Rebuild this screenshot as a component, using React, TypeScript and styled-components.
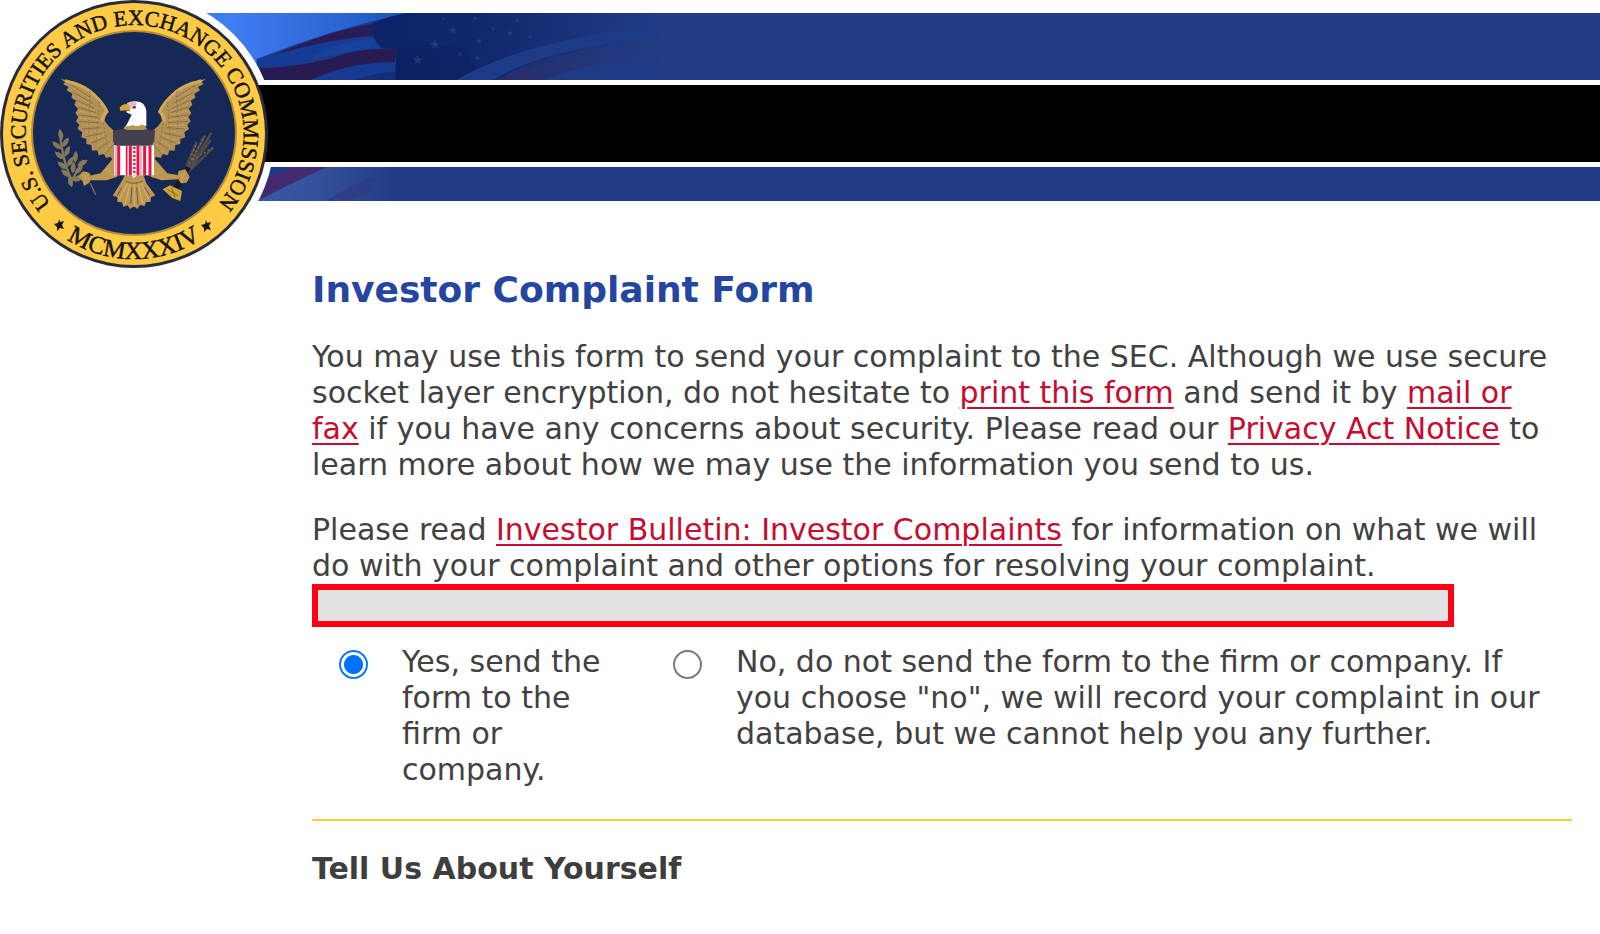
import React from "react";
import styled, { createGlobalStyle } from "styled-components";

const GlobalStyle = createGlobalStyle`
  *, *::before, *::after { box-sizing: border-box; }
  body {
    margin: 0;
    background: #fff;
    color: #414141;
    font-family: Verdana, "DejaVu Sans", sans-serif;
    font-size: 30px;
    line-height: 36px;
  }
`;

const Page = styled.div`
  min-height: 100vh;
  overflow: hidden;
`;

const Masthead = styled.header`
  position: relative;
  display: flex;
  flex-direction: column;
  gap: 5px;
  padding: 13px 0 0 134px;
`;

const Band = styled.div<{ $height: number; $color: string }>`
  height: ${(p) => p.$height}px;
  background: ${(p) => p.$color};
  overflow: hidden;

  svg { display: block; }
`;

const SealLink = styled.a`
  position: absolute;
  top: 0;
  left: 0;

  svg { display: block; }
`;

const RingText = styled.text<{ $size: number }>`
  font-family: "Liberation Serif", "Times New Roman", serif;
  font-size: ${(p) => p.$size}px;
  fill: #15151c;
  stroke: #15151c;
  stroke-width: 0.5px;
`;

const Content = styled.main`
  padding: 67px 28px 32px 312px;
`;

const Title = styled.h1`
  margin: 0 0 27px;
  color: #2546a0;
  font-size: 36px;
  line-height: 44px;
`;

const Paragraph = styled.p`
  margin: 0 0 29px;
  padding-right: 14px;

  &:last-of-type { margin-bottom: 0; }
`;

const TextLink = styled.a`
  color: #c60c30;
  text-decoration: underline;
  text-decoration-thickness: 2px;
  text-underline-offset: 4px;
`;

const Notice = styled.div`
  height: 43px;
  margin-right: 118px;
  border: 6px solid #ff0015;
  background: #e1e1e1;
`;

const Options = styled.fieldset`
  display: flex;
  gap: 61px;
  margin: 0;
  padding: 17px 14px 31px 27px;
  border: 0;
  border-bottom: 2px solid #ffcb3d;
`;

const Option = styled.label<{ $grow?: boolean }>`
  display: flex;
  align-items: flex-start;
  gap: 34px;
  flex: ${(p) => (p.$grow ? "1 1 0" : "0 0 273px")};
  min-width: 0;
`;

const Radio = styled.input`
  appearance: none;
  flex: none;
  width: 29px;
  height: 29px;
  margin: 6px 0 0;
  border: 2px solid #7b7b7b;
  border-radius: 50%;
  background: #fff;

  &:checked {
    border-color: #0a75ff;
    background: radial-gradient(circle, #0070ff 9px, #fff 10px);
  }
`;

const SectionTitle = styled.h2`
  margin: 30px 0 0;
  color: #3e3e3e;
  font-size: 30px;
  line-height: 36px;
`;

const FlagTop = () => (
  <svg width="640" height="67" viewBox="-288 40 1920 201" aria-hidden="true">
    <defs>
      <linearGradient id="sky" gradientUnits="userSpaceOnUse" x1="0" y1="0" x2="520" y2="0">
        <stop offset="0" stopColor="#3f7df2" />
        <stop offset="0.25" stopColor="#3973e6" />
        <stop offset="0.7" stopColor="#2663d0" />
        <stop offset="1" stopColor="#1c52b4" />
      </linearGradient>
      <linearGradient id="canton" gradientUnits="userSpaceOnUse" x1="420" y1="0" x2="1300" y2="0">
        <stop offset="0" stopColor="#0c2367" />
        <stop offset="0.35" stopColor="#0f276b" />
        <stop offset="0.7" stopColor="#1a3279" />
        <stop offset="1" stopColor="#213c85" />
      </linearGradient>
      <linearGradient id="stripe" gradientUnits="userSpaceOnUse" x1="560" y1="0" x2="1290" y2="0">
        <stop offset="0" stopColor="#2b2367" />
        <stop offset="0.5" stopColor="#26306f" />
        <stop offset="1" stopColor="#213c85" />
      </linearGradient>
    </defs>
    <rect x="-288" y="40" width="1000" height="201" fill="url(#sky)" />
    <path d="M80 178 Q300 90 530 40 H1632 V241 H80Z" fill="#193c8b" />
    <path d="M190 142 Q330 86 425 74 L435 110 Q330 108 90 182Z" fill="#291d57" />
    <path d="M80 182 Q260 122 430 112 L450 148 Q350 158 220 188 L90 205Z" fill="#163b94" />
    <path d="M250 165 Q330 125 430 116 L444 145 Q350 155 250 180Z" fill="#17429d" />
    <path d="M90 205 Q250 200 350 160 Q420 144 500 150 L495 188 Q400 185 300 218 L240 241 H90Z" fill="#281b54" />
    <path d="M245 241 Q380 185 495 188 V241Z" fill="#173b91" />
    <path d="M370 241 Q430 220 495 216 V241Z" fill="#142d78" />
    <path d="M420 76 Q450 55 530 40 H1632 V241 H495 L500 150 L455 146 Q425 115 420 76Z" fill="url(#canton)" />
    <path d="M500 150 Q620 125 700 150 L740 205 L680 241 H495Z" fill="#07205f" opacity=".5" />
    <path d="M680 241 Q860 130 1260 80 L1290 112 Q930 150 790 241Z" fill="#1e3b87" />
    <path d="M800 241 Q950 155 1270 125 L1250 178 Q1050 195 940 241Z" fill="url(#stripe)" />
    <path d="M940 241 Q1060 190 1290 170 V241Z" fill="#203b85" />
    <g fill="#3b559b" opacity=".45">
      {[[668, 91, 15], [615, 134, 16], [563, 181, 16], [748, 124, 11], [690, 163, 9], [742, 174, 10], [840, 100, 9], [900, 113, 7], [735, 56, 8], [790, 88, 7], [640, 58, 7], [860, 62, 7]].map(([x, y, r]) => (
        <path
          key={`${x}-${y}`}
          transform={`translate(${x} ${y}) scale(${r})`}
          d="M0-1 L.25-.3 1-.3 .4.15 .6.9 0 .4-.6.9-.4.15-1-.3-.25-.3Z"
        />
      ))}
    </g>
  </svg>
);

const FlagBottom = () => (
  <svg width="280" height="34" viewBox="-288 500 840 102" aria-hidden="true">
    <defs>
      <linearGradient id="lowSky" gradientUnits="userSpaceOnUse" x1="100" y1="0" x2="500" y2="0">
        <stop offset="0" stopColor="#3658a8" />
        <stop offset="0.4" stopColor="#34509a" />
        <stop offset="1" stopColor="#213c85" />
      </linearGradient>
    </defs>
    <rect x="-288" y="500" width="840" height="102" fill="url(#lowSky)" />
    <path d="M100 500 H185 L115 542Z" fill="#1e3988" />
    <path d="M115 530 L190 500 H290 Q180 550 90 598Z" fill="#432a70" />
    <path d="M290 602 Q370 545 440 530 L430 570 L360 602Z" fill="#2e397f" opacity=".6" />
  </svg>
);

const Wing = () => (
  <>
    <path
      d="M62 57 L108 66 Q140 78 163 100 Q190 125 205 155 Q196 166 194 182 Q205 200 222 212 L224 302 L210 290 L198 294 L192 282 L176 286 L172 271 L156 272 L154 255 L139 252 L139 237 L124 232 L127 217 L113 207 L118 194 L108 184 L115 171 L106 159 L114 146 L103 134 L108 122 L94 113 L97 101 L80 91 L86 81 L69 72 L76 67Z"
      fill="#b39155"
    />
    <path d="M76 62 Q140 78 166 108 Q190 130 201 155 Q188 165 186 184" fill="none" stroke="#d2aa53" strokeWidth="9" />
    <g fill="none" stroke="#6b5d55" strokeWidth="2">
      <path d="M94 76 L150 112 M99 97 L158 130 M108 120 L163 145 M113 141 L168 158 M114 164 L172 172 M116 184 L176 188 M126 207 L181 203 M138 230 L188 219 M154 249 L197 232 M174 268 L208 244 M195 283 L218 256" />
      <path d="M150 94 L146 220 M178 125 L168 250 M190 190 L204 270" strokeDasharray="5 7" />
    </g>
    <g fill="none" stroke="#d3aa50" strokeWidth="3" strokeDasharray="7 5">
      <path d="M103 84 L153 119 M112 108 L160 137 M116 131 L165 151 M119 153 L169 165 M120 174 L172 180 M128 196 L178 195 M138 218 L184 211 M151 240 L192 226 M171 260 L201 239 M191 277 L213 251" />
    </g>
  </>
);

const Leaf = ({ x, y, angle }: { x: number; y: number; angle: number }) => (
  <path transform={`translate(${x} ${y}) rotate(${angle})`} d="M0 0 Q-15-16 0-36 Q15-16 0 0Z" />
);

const Eagle = () => (
  <g transform="translate(40 60) scale(.33333)">
    <Wing />
    <g transform="translate(560 0) scale(-1 1)">
      <Wing />
    </g>
    {/* olive branch */}
    <path d="M60 225 Q72 320 96 360 L128 342 M96 360 L130 300" fill="none" stroke="#82775a" strokeWidth="7" />
    <g fill="#857957">
      <Leaf x={65} y={242} angle={-10} />
      <Leaf x={64} y={268} angle={-50} />
      <Leaf x={66} y={262} angle={35} />
      <Leaf x={72} y={298} angle={-50} />
      <Leaf x={74} y={290} angle={25} />
      <Leaf x={80} y={328} angle={-50} />
      <Leaf x={82} y={320} angle={30} />
      <Leaf x={90} y={352} angle={-48} />
      <Leaf x={96} y={382} angle={-15} />
      <Leaf x={98} y={340} angle={5} />
      <Leaf x={104} y={342} angle={45} />
      <Leaf x={112} y={318} angle={60} />
      <Leaf x={105} y={308} angle={5} />
      <Leaf x={98} y={362} angle={70} />
    </g>
    {/* arrows */}
    <path d="M440 342 L514 218 M435 330 L470 245 M440 340 L520 262 M440 340 L512 240 M445 325 L492 230" stroke="#4d4a4c" strokeWidth="8" />
    <path d="M448 310 L498 222 M459 300 L515 264 M455 285 L470 250" stroke="#92773b" strokeWidth="4" strokeDasharray="5 8" />
    <path d="M445 322 L408 384" stroke="#17171f" strokeWidth="16" />
    <path d="M368 388 L390 376 L426 393 L421 423 L397 414Z" fill="#cda334" />
    <path d="M382 388 L414 407 M395 384 L405 412" stroke="#8b6726" strokeWidth="3" />
    {/* legs and talons */}
    <path d="M222 292 L182 340 L135 350 L150 361 L200 361 L232 350Z M340 292 L382 340 L430 348 L415 358 L365 361 L332 350Z" fill="#bd9850" />
    <path d="M115 350 L128 334 L148 338 L155 354 L148 368 L132 378 L128 364Z M449 350 L436 328 L416 333 L412 352 L422 370 L440 368Z" fill="#bb9453" />
    <path d="M151 370 L167 404" stroke="#857356" strokeWidth="4" />
    <path d="M125 345 L150 358 M140 336 L132 373 M420 345 L445 357 M435 332 L424 368 M202 325 L224 352 M360 325 L338 352" stroke="#dab253" strokeWidth="3" strokeDasharray="5 5" />
    {/* tail */}
    <path d="M255 345 H310 L320 371 L346 406 L333 412 L331 426 L318 426 L314 438 L300 435 L292 447 L282 439 L270 447 L263 436 L250 440 L246 427 L232 426 L232 411 L218 407 L240 372 Z" fill="#ba9657" />
    <path d="M265 365 L238 418 M272 368 L255 433 M283 365 V440 M295 368 L308 432 M302 365 L326 418" stroke="#dbb04e" strokeWidth="4" />
    <path d="M258 365 Q280 375 309 364 M246 382 L232 407 M314 382 L330 408 M276 382 L272 433 M290 382 L294 433" fill="none" stroke="#675849" strokeWidth="3" />
    {/* head */}
    <path d="M250 205 L263 191 L311 190 L320 207Z" fill="#c3a15b" />
    <path d="M262 129 Q278 121 300 126 Q316 132 319 153 V199 L304 193 L292 201 L280 195 L257 200 L275 164 L259 157Z" fill="#fff" />
    <path d="M264 130 Q277 124 288 127 L289 145 L275 146 L259 151Z" fill="#e4bbbd" />
    <path d="M241 140 Q250 129 265 133 L270 149 L242 153 Q237 144 241 140Z" fill="#d8a42e" />
    <path d="M249 152 H270" stroke="#725c29" strokeWidth="3" />
    <circle cx="283" cy="142" r="4" fill="#373252" />
    {/* shield */}
    <path d="M222 256 H342 V346 H290 L282 354 L275 346 H222Z" fill="#fff" />
    <path d="M236 258 V346 M271 258 V346 M294 258 V346 M314 258 V346 M330 258 V346" stroke="#e71345" strokeWidth="9" />
    <path d="M260 258 V346" stroke="#e71345" strokeWidth="5" />
    <path d="M227 258 V346 M302 258 V346" stroke="#dfb0b9" strokeWidth="7" />
    <path d="M283 260 V346" stroke="#e71345" strokeWidth="7" strokeDasharray="7 5" />
    <path d="M219 211 Q280 203 345 211 L343 244 L333 257 H230 L219 246Z" fill="#43404f" />
    <path d="M250 206 L262 198 H308 L322 206 L310 210 H263Z" fill="#b99753" />
  </g>
);

const Seal = () => (
  <svg width="278" height="276" viewBox="0 0 278 276" role="img" aria-label="U.S. Securities and Exchange Commission">
    <circle cx="134" cy="134" r="141" fill="#fff" />
    <rect x="240" y="85" width="38" height="77" fill="#000" />
    <circle cx="134" cy="134" r="134" fill="#292a3b" />
    <circle cx="134" cy="134" r="131" fill="#ffcb45" />
    <circle cx="134" cy="133" r="103" fill="#b28c3e" />
    <circle cx="134" cy="133" r="101" fill="#162856" />
    <path id="ringUpper" d="M 134 243 A 109 109 0 1 1 135 243" fill="none" />
    <path id="ringLower" d="M 9 134 A 125 125 0 0 0 259 134" fill="none" />
    <RingText $size={22} textAnchor="middle">
      <textPath href="#ringUpper" startOffset="50%">U.S. SECURITIES AND EXCHANGE COMMISSION</textPath>
    </RingText>
    <RingText $size={25} textAnchor="middle">
      <textPath href="#ringLower" startOffset="50%">MCMXXXIV</textPath>
    </RingText>
    <path d="M59 219 l1 3 4-1-2 4 2 4-4-1-3 3 0-4-3-3 4-1Z M206 220 l1 3 4-1-2 4 2 4-4-1-3 3 0-4-3-3 4-1Z" fill="#17171f" />
    <Eagle />
  </svg>
);

export default function App() {
  return (
    <Page>
      <GlobalStyle />
      <Masthead>
        <Band $height={67} $color="#213c85">
          <FlagTop />
        </Band>
        <Band $height={77} $color="#000" />
        <Band $height={34} $color="#213c85">
          <FlagBottom />
        </Band>
        <SealLink href="#home">
          <Seal />
        </SealLink>
      </Masthead>
      <Content>
        <Title>Investor Complaint Form</Title>
        <Paragraph>
          You may use this form to send your complaint to the SEC. Although we use secure socket layer
          encryption, do not hesitate to <TextLink href="#print">print this form</TextLink> and send it by{" "}
          <TextLink href="#mail">mail or fax</TextLink> if you have any concerns about security. Please read
          our <TextLink href="#privacy">Privacy Act Notice</TextLink> to learn more about how we may use the
          information you send to us.
        </Paragraph>
        <Paragraph>
          Please read <TextLink href="#bulletin">Investor Bulletin: Investor Complaints</TextLink> for
          information on what we will do with your complaint and other options for resolving your complaint.
        </Paragraph>
        <Notice />
        <form>
          <Options aria-label="Send the form to the firm or company">
            <Option htmlFor="send-yes">
              <Radio type="radio" id="send-yes" name="send" value="yes" defaultChecked />
              <span>Yes, send the form to the firm or company.</span>
            </Option>
            <Option htmlFor="send-no" $grow>
              <Radio type="radio" id="send-no" name="send" value="no" />
              <span>
                No, do not send the form to the firm or company. If you choose "no", we will record your
                complaint in our database, but we cannot help you any further.
              </span>
            </Option>
          </Options>
          <SectionTitle>Tell Us About Yourself</SectionTitle>
        </form>
      </Content>
    </Page>
  );
}
